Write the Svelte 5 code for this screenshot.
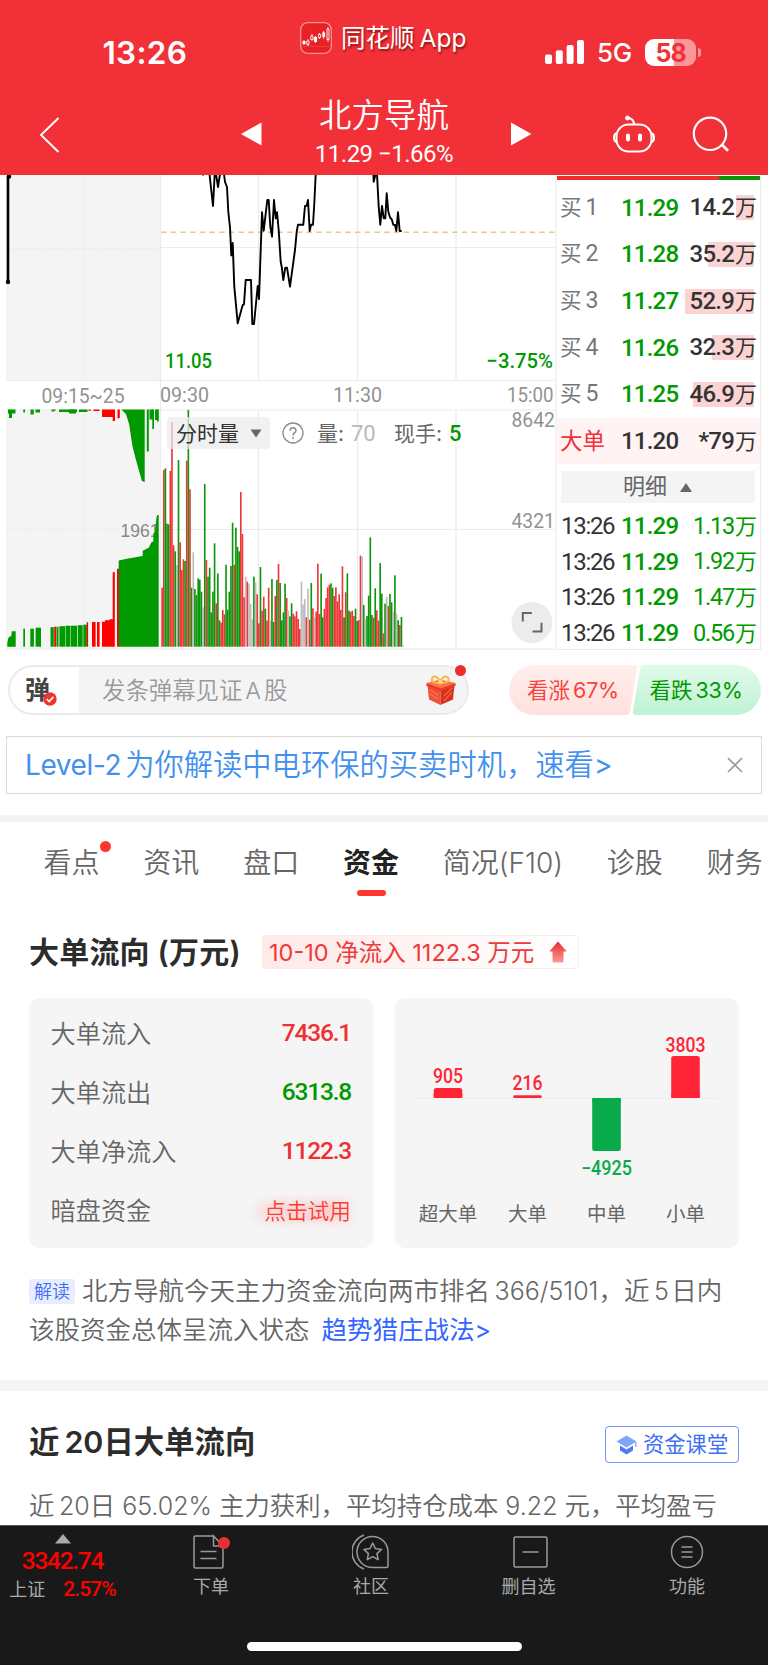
<script lang="ts">
  /**
   * Stock detail page: intraday chart, order book and capital flow.
   */
  interface Level {
    label: string;
    price: string;
    volume: string;
    depth: number;
  }

  const levels: Level[] = [
    { label: '买1', price: '11.29', volume: '14.2', depth: 18 },
    { label: '买2', price: '11.28', volume: '35.2', depth: 46 },
    { label: '买3', price: '11.27', volume: '52.9', depth: 69 },
    { label: '买4', price: '11.26', volume: '32.3', depth: 42 },
    { label: '买5', price: '11.25', volume: '46.9', depth: 61 },
  ];

  const trades = ['1.13', '1.92', '1.47', '0.56'];

  const tabs = ['看点', '资讯', '盘口', '资金', '简况(F10)', '诊股', '财务'];
  let activeTab = $state('资金');

  const flows = [
    { label: '大单流入', value: '7436.1', tone: 'up' },
    { label: '大单流出', value: '6313.8', tone: 'down' },
    { label: '大单净流入', value: '1122.3', tone: 'up' },
  ];

  const orderBars = [
    { label: '超大单', value: '905', x: 53, top: 90, height: 10, labelY: 85, w: 30 },
    { label: '大单', value: '216', x: 132.5, top: 97.3, height: 2.7, labelY: 92, w: 30 },
    { label: '中单', value: '−4925', x: 211.5, top: 100, height: 53, labelY: 177, w: 51 },
    { label: '小单', value: '3803', x: 290.5, top: 58, height: 42, labelY: 53.5, w: 40 },
  ];

  // minute volume, colour letter followed by the distance from the top (thirds of a pixel)
  const minuteVolume = (
    'r563 r210 g205 g371 g373 r213 r67 r436 g454 n495 g180 r427 r510 r478 g483 r182 g30 r268 g563 n457 ' +
    'g567 g585 g535 g539 g575 n622 g252 r480 g530 g503 g637 g575 g430 r610 g520 g661 r668 r630 r643 g494 ' +
    'g629 g575 g498 g368 r494 g383 g441 g454 r276 r402 r592 n530 r545 n551 n612 n658 g530 n547 r583 r670 ' +
    'g501 r632 r590 g626 r662 r563 n662 g537 g666 r588 g540 r492 g549 g661 g637 g551 r594 n632 g649 g610 ' +
    'r641 r649 r634 r657 r687 n545 n614 n597 r652 n566 r659 g549 r625 n652 r635 r491 r642 g521 g652 r627 ' +
    'r594 r562 r554 g550 g563 r588 r562 r604 r583 r630 r499 g652 r577 g520 g632 r636 r632 r648 g626 g663 ' +
    'r660 r467 n470 g615 n656 g648 g587 g412 g645 r653 g565 r631 r662 g489 g581 r700 g611 n590 r618 g582 ' +
    'g607 n636 g526 n641 g661 r675 g651 n736'
  ).split(' ').map((item, i) => {
    const top = Number(item.slice(1)) / 3 + 226;
    return { x: 161.3 + i * 1.6393, top, height: 472.7 - top, tone: item[0] };
  });

  // call auction bars: x, width, height, tone
  const matched: [number, number, number, string][] = [
    [23.3, 1.7, 18, 'g'], [30.3, 3.6, 18, 'g'], [35.6, 5.4, 19, 'g'],
    [50.5, 3.3, 19.5, 'g'], [54.2, 2, 20, 'r'], [56.5, 2, 20, 'g'],
    [59.4, 5.6, 20.5, 'g'], [65.5, 5, 21, 'g'], [71, 6.3, 21, 'g'],
    [78, 4.7, 21.5, 'g'], [83.3, 3.6, 22, 'g'], [86.7, 1.4, 24.5, 'r'],
    [92, 3.6, 24.7, 'r'], [97, 2.6, 24.7, 'r'], [102, 3.4, 25, 'r'],
    [105, 5, 26.5, 'r'], [109.5, 3.6, 27.5, 'r'], [112.7, 2.1, 74.5, 'r'],
    [117, 2.2, 78, 'r'],
  ];
  const unmatched: [number, number, number, string][] = [
    [8, 2, 4, 'g'], [9, 3, 8.5, 'g'], [12, 3.5, 4, 'g'], [23.3, 1.7, 3, 'g'],
    [30.5, 3.3, 5, 'g'], [35.5, 4.5, 3, 'g'], [51.5, 3, 2, 'g'], [54.3, 1.5, 1, 'r'],
    [59, 18, 2.5, 'g'], [69, 7, 4, 'g'], [79, 8.5, 2.5, 'g'], [88.5, 2.3, 1.3, 'r'],
    [93.5, 6, 1.5, 'r'], [102, 11, 7.5, 'r'], [112.7, 2.3, 11.5, 'r'], [117.5, 2.3, 8.7, 'r'],
    [146.8, 2, 42, 'g'], [149.5, 4, 10, 'g'], [152.3, 1.7, 19.5, 'g'], [155, 3.5, 10.5, 'g'],
    [157, 1.7, 12, 'g'],
  ];

  const pricePath =
    'M203 0v1.5M209.5 0L213 32L214.7 0M216 0L218 13L220 0M224 0L225 8L227 13L228.3 38L230 53L231.3 81.5L232.7 69' +
    'L234.3 112.7L237.7 149.3L242.7 131L244 130.3L245.7 106H251L252.3 150H254L257.7 112L259 125L262 38.3L263.7 56.7' +
    'L267.3 26H268.7L270.3 52.7L272 62.7L274 26L275.7 44.3L277 38.3L278.7 56L280.7 87.7L281.7 92.7L283.3 106' +
    'L285.3 93.7H287L290 112.7L295 76L296.7 57.7L298 50.7H303.3L305 32L306.7 31.7L308 26L309.7 57L311 50.7H313' +
    'L314.3 29.3L315.7 0M373.3 0L373.7 7.7L375.3 1L377 0L378.7 32.7L380.3 50.7L382 32L383.7 44.3H385.3L386.7 19.3' +
    'L388.3 37.7L390 43.3L391.7 45.3L393.3 50.7L395 51L396.3 57L398 38.3L399.7 57H401.7';
</script>

<div class="app">
  <header class="header">
    <div class="status">
      <span class="clock">13:26</span>
      <div class="island">
        <svg width="32" height="32" viewBox="0 0 32 32">
          <rect x="0.7" y="0.7" width="30.6" height="30.6" rx="7" fill="#e62226" stroke="#f78f90" stroke-width="1.3" />
          <path d="M2 24.5h28" stroke="#f04a4a" stroke-width="0.6" />
          <path d="M4 18v5M8 17v7M12 12v7M15.5 14v7M19.5 11v6M23.500 9v8M28 5v15" stroke="#fff" stroke-width="0.8" />
          <path d="M2.500 19h3v3h-3zM14 15h3v5h-3zM22.300 10.500h2.800v4.500h-2.800z" fill="#fff" />
          <path d="M6.800 19h2.200v3.500H6.800zM10.800 14h2.200v3.500h-2.200zM18.400 12.500h2.200v3h-2.200zM27 7h2v10.500h-2z" fill="#e62226" stroke="#fff" stroke-width="0.9" />
        </svg>
        <span>同花顺<i>App</i></span>
      </div>
      <div class="signals">
        <svg width="40" height="25" viewBox="0 0 40 25" fill="#fff">
          <rect x="0" y="14.500" width="7" height="9.500" rx="2" />
          <rect x="10.800" y="10.300" width="7" height="13.700" rx="2" />
          <rect x="21.600" y="5" width="7" height="19" rx="2" />
          <rect x="32" y="0" width="7" height="24" rx="2" />
        </svg>
        <span class="net">5G</span>
        <span class="battery">58</span>
      </div>
    </div>
    <div class="nav">
      <svg class="back" width="22" height="38" viewBox="0 0 22 38">
        <path d="M19.500 2L2 19l17.500 17" fill="none" stroke="#fff" stroke-width="1.900" />
      </svg>
      <div class="stock">
        <svg width="21" height="24" viewBox="0 0 21 24"><path d="M0 12L20.500 0.500v23z" fill="#fff" /></svg>
        <div class="name">
          <h1>北方导航</h1>
          <p>11.29 −1.66%</p>
        </div>
        <svg width="21" height="24" viewBox="0 0 21 24"><path d="M20.500 12L0 0.500v23z" fill="#fff" /></svg>
      </div>
      <div class="tools">
        <svg width="42" height="40" viewBox="0 0 42 40" fill="none" stroke="#fff" stroke-width="2">
          <rect x="3.500" y="9.500" width="35" height="27" rx="12" />
          <path d="M4 18c-4 1-4 8 0 9.500M38 18c4 1 4 8 0 9.500" />
          <path d="M21 9.500c0-4-2-6-6-6.500" />
          <circle cx="14.500" cy="3" r="2" fill="#fff" stroke-width="1" />
          <path d="M15 20.500v4M27 20.500v4" stroke-width="4" stroke-linecap="round" />
        </svg>
        <svg width="38" height="39" viewBox="0 0 38 39" fill="none" stroke="#fff" stroke-width="2.200">
          <circle cx="18" cy="18.800" r="16.200" />
          <path d="M29.500 29.300l6.500 6.500" stroke-width="2.800" />
        </svg>
      </div>
    </div>
  </header>

  <section class="quote">
    <div class="charts">
      <svg width="557" height="475" viewBox="0 1 557 475">
        <rect x="6" y="0" width="154.500" height="206.500" fill="#f4f4f4" />
        <rect x="6" y="235.500" width="154.500" height="239" fill="#f4f4f4" />
        <g stroke="#ececec" stroke-width="1.200">
          <path d="M160.500 0V475M258.500 0V206.500M357.500 0V206.500M456 0V206.500M556 0V475M160.500 73.500H556M6 206.500H556" />
          <path d="M258.500 236V475M357.500 236V475M456 236V475M6 236H556M160.500 355.500H556M6 475.200H556" />
          <path d="M84 0V206M84 236V475M6 74.800H160M6 355H160" stroke="#eaeaea" stroke-dasharray="2 1.500" />
        </g>
        <path d="M161 58.300H556" stroke="#e9c795" stroke-width="1.400" stroke-dasharray="5.500 4.200" />
        <path d="M8 2V108" stroke="#000" stroke-width="2.600" />
        <circle cx="9" cy="2.500" r="2.200" />
        <circle cx="8" cy="108" r="2.200" />
        <path d={pricePath} fill="none" stroke="#000" stroke-width="1.900" stroke-linejoin="round" />

        <g class="num strong" fill="#009a00" font-size="21">
          <text x="165" y="194" textLength="47" lengthAdjust="spacingAndGlyphs">11.05</text>
          <text x="486.500" y="194" textLength="66.500" lengthAdjust="spacingAndGlyphs">−3.75%</text>
        </g>
        <g class="num scale" fill="#929292" font-size="20.500">
          <text x="41.500" y="229" textLength="83" lengthAdjust="spacingAndGlyphs">09:15~25</text>
          <text x="160" y="227.500" textLength="49" lengthAdjust="spacingAndGlyphs">09:30</text>
          <text x="333" y="227.500" textLength="49" lengthAdjust="spacingAndGlyphs">11:30</text>
          <text x="507" y="227.500" textLength="46.500" lengthAdjust="spacingAndGlyphs">15:00</text>
        </g>
        <text class="sans" x="120.500" y="362.500" font-size="17.500" fill="#888">1961</text>

        {#each minuteVolume as bar}
          <rect class={bar.tone} x={bar.x} y={bar.top} width="1.640" height={bar.height} />
        {/each}
        <g class="auction">
          {#each matched as [x, width, height, tone]}
            <rect class={tone} {x} y={472.7 - height} {width} {height} />
          {/each}
          {#each unmatched as [x, width, height, tone]}
            <rect class={tone} {x} y="235.500" {width} {height} />
          {/each}
          <path class="g" d="M7.300 472.700v-4l1-5 3-2 .5-4.500H15.700v15.500z" />
          <path class="g" d="M118.700 472.700V386.500l9.500-2 14.500-2.500v-5.300l6-3 3-6h1.600V359h1.500l1.700-15.500.7-2.500h1.500v131.700z" />
          <path class="g" d="M121.500 235.500l4.500 4.500 3.300 11 1.700 11.700 1.700 10.600 3.300 12.700 3.300 11.700 2.500 9 2.900 1.500V235.500z" />
        </g>

        <g class="num scale" fill="#929292" font-size="20.500">
          <text x="511.500" y="252.500" textLength="43.500" lengthAdjust="spacingAndGlyphs">8642</text>
          <text x="511.500" y="353.500" textLength="43.500" lengthAdjust="spacingAndGlyphs">4321</text>
        </g>
        <circle cx="532" cy="448.500" r="20.500" fill="#ececec" />
        <path d="M522.800 447.500V439h9M532.500 457.500h9v-8.800" fill="none" stroke="#666" stroke-width="2" />
      </svg>
      <div class="legend">
        <span class="picker"><span>分时量</span>
          <svg width="12" height="9" viewBox="0 0 12 9"><path d="M0.500 0.500h11L6 8.500z" fill="#666" /></svg>
        </span>
        <svg class="help" width="22" height="22" viewBox="0 0 22 22" fill="none" stroke="#8a8a8a" stroke-width="1.300">
          <circle cx="11" cy="11" r="10" />
          <path d="M8 8.800c0-4 6-4 6-.3 0 2.300-3 2.500-3 5" stroke-width="1.500" />
          <path d="M11 15.300v1.700" stroke-width="1.700" />
        </svg>
        <span class="volume">量: <b>70</b></span>
        <span class="last">现手: <b>5</b></span>
      </div>
    </div>

    <aside class="book">
      <div class="ratio"></div>
      {#each levels as level}
        <div class="level">
          <span class="label">{level.label[0]}<i>{level.label[1]}</i></span>
          <span class="price">{level.price}</span>
          <span class="amount" style:--depth="{level.depth}px">{level.volume}<em>万</em></span>
        </div>
      {/each}
      <div class="level big">
        <span class="label">大单</span>
        <span class="price">11.20</span>
        <span class="amount">*79<em>万</em></span>
      </div>
      <div class="detail">
        明细
        <svg width="12" height="9" viewBox="0 0 12 9"><path d="M0 9h12L6 0z" fill="#666" /></svg>
      </div>
      {#each trades as amount}
        <div class="trade">
          <span class="time">13:26</span>
          <span class="price">11.29</span>
          <span class="amount">{amount}<em>万</em></span>
        </div>
      {/each}
    </aside>
  </section>

  <div class="social">
    <div class="danmu">
      <div class="mark">弹
        <svg width="14" height="14" viewBox="0 0 14 14">
          <circle cx="7" cy="7" r="6.700" fill="#ee352d" />
          <path d="M3.800 7l2.400 2.600 4.200-4.700" fill="none" stroke="#fff" stroke-width="1.600" />
        </svg>
      </div>
      <span class="hint">发条弹幕见证<i>A</i>股</span>
      <svg class="gift" width="30" height="32" viewBox="0 0 30 32">
        <path d="M1.500 11L14.500 15v16L3 25.500z" fill="#ef5236" />
        <path d="M28.500 11L14.500 15v16L27 25.500z" fill="#d93122" />
        <path d="M0.500 9L14 5.500 29.500 9 14.500 14.500z" fill="#ff7043" />
        <path d="M0.500 9v3l14 5 15-5V9l-15 5.300z" fill="#e73b26" />
        <path d="M4 16l8 5M4 20l8 5M18 27l8-9M18 22l8-8" stroke="#f98a49" stroke-width="1" />
        <path d="M14 8.500C9 9.500 5 8 6 4.500s6.500-2.500 8 4c2-6.500 7-7.500 8.500-4s-3.500 5-8.500 4z" fill="none" stroke="#f7b84a" stroke-width="2" />
        <circle cx="14.500" cy="8" r="2.300" fill="#ffd873" />
      </svg>
      <span class="dot"></span>
    </div>
    <div class="vote">
      <svg width="253" height="50" viewBox="0 0 253 50">
        <defs>
          <linearGradient id="rise" x1="0" y1="0" x2="0" y2="1">
            <stop offset="0" stop-color="#ffefed" />
            <stop offset="1" stop-color="#ffe0dc" />
          </linearGradient>
          <linearGradient id="fall" x1="0" y1="0" x2="0" y2="1">
            <stop offset="0" stop-color="#e0faeb" />
            <stop offset="1" stop-color="#bff2d4" />
          </linearGradient>
        </defs>
        <path d="M26 0h100q4 0 3 4l-7 43q-1 3-4 3H26A25 25 0 0 1 26 0z" fill="url(#rise)" />
        <path d="M136 0h92a25 25 0 0 1 0 50H128q-4 0-3-4l7-42q1-4 4-4z" fill="url(#fall)" />
      </svg>
      <span class="rise">看涨<i>67%</i></span>
      <span class="fall">看跌<i>33%</i></span>
    </div>
  </div>

  <div class="notice">
    <span><i>Level-2</i>为你解读中电环保的买卖时机，速看<i>&gt;</i></span>
    <svg width="16" height="16" viewBox="0 0 16 16"><path d="M1 1l14 14M15 1L1 15" stroke="#999" stroke-width="1.700" /></svg>
  </div>

  <nav class="tabs">
    {#each tabs as tab}
      <button class:active={activeTab === tab} class:fresh={tab === '看点'} onclick={() => (activeTab = tab)}>{tab}</button>
    {/each}
  </nav>

  <section class="flow">
    <div class="heading">
      <h2>大单流向<i>&nbsp;(</i>万元<i>)</i></h2>
      <span class="chip"><span>10-10 净流入 1122.3 万元</span>
        <svg width="18" height="22" viewBox="0 0 18 22">
          <defs>
            <linearGradient id="arrow" x1="0" y1="0" x2="0" y2="1">
              <stop offset="0" stop-color="#e92b2b" />
              <stop offset="1" stop-color="#fa9a9a" />
            </linearGradient>
          </defs>
          <path d="M9 0.500L17.800 10.500H14.500V20q0 1.500-1.500 1.500H5q-1.500 0-1.500-1.500v-9.500H0.200z" fill="url(#arrow)" />
        </svg>
      </span>
    </div>
    <div class="cards">
      <div class="card list">
        {#each flows as flow}
          <div class="item"><span>{flow.label}</span><b class={flow.tone}>{flow.value}</b></div>
        {/each}
        <div class="item"><span>暗盘资金</span><span class="trial">点击试用</span></div>
      </div>
      <div class="card">
        <svg width="344" height="250" viewBox="0 0 344 250">
          <path d="M21 100.200H323" stroke="#ebebeb" />
          {#each orderBars as bar}
            {@const down = bar.value.startsWith('−')}
            <g fill={down ? '#09aa4a' : '#ff2537'}>
              <rect x={bar.x - 14.3} y={bar.top} width="28.600" height={bar.height} rx={Math.min(2.5, bar.height / 2)} />
              {#if bar.height > 5}
                <rect x={bar.x - 14.3} y={down ? bar.top : bar.top + bar.height - 4} width="28.600" height="4" />
              {/if}
              <text
                class="num strong"
                x={bar.x - bar.w / 2}
                y={bar.labelY}
                font-size="19.500"
                textLength={bar.w}
                lengthAdjust="spacingAndGlyphs">{bar.value}</text>
            </g>
            <text class="axis" x={bar.x} y="223" text-anchor="middle">{bar.label}</text>
          {/each}
        </svg>
      </div>
    </div>
    <p class="insight">
      <span class="tag">解读</span>北方导航今天主力资金流向两市排名<i>&#8201;366/5101</i>，近<i>&#8201;5&#8202;</i>日内<br />该股资金总体呈流入状态<a href="#strategy">趋势猎庄战法<i>&gt;</i></a>
    </p>
  </section>

  <section class="recent">
    <div class="heading">
      <h2>近<i>&#8201;20</i>日大单流向</h2>
      <span class="course">
        <svg width="21" height="20" viewBox="0 0 21 20">
          <path d="M10.500 0.500L20.500 6.500 10.500 12.500 0.500 6.500z" fill="#7fa6fb" />
          <path d="M4 10.500l6.500 4 6.500-4v5L10.500 19.500 4 15.500z" fill="#4b7ef5" />
          <path d="M19.800 7v5" stroke="#7fa6fb" stroke-width="1.200" />
        </svg>
        <span>资金课堂</span>
      </span>
    </div>
    <p>近<i>&#8201;20</i>日<i>&nbsp;65.02%&nbsp;</i>主力获利，平均持仓成本<i>&nbsp;9.22&nbsp;</i>元，平均盈亏</p>
  </section>

  <footer class="footer">
    <div class="bar">
      <div class="index">
        <svg width="16" height="10" viewBox="0 0 16 10"><path d="M0 9.500h16L8 0z" fill="#aaa" /></svg>
        <b>3342.74</b>
        <p>上证<span>2.57%</span></p>
      </div>
      <div class="entry">
        <svg width="37" height="34" viewBox="0 0 37 34" fill="none" stroke="#999" stroke-width="1.500">
          <path d="M20.500 1H2.500q-1.500 0-1.500 1.500v29q0 1.500 1.500 1.500h26q1.500 0 1.500-1.500V11L20.500 1v10H30M7.500 16.500h16M7.500 23.500h16" />
          <circle class="badge" cx="31" cy="8" r="6" />
        </svg>
        <span>下单</span>
      </div>
      <div class="entry">
        <svg width="38" height="36" viewBox="0 0 38 36" fill="none" stroke="#999" stroke-width="1.500">
          <path d="M36 18v14q0 1.500-1.500 1.500H20.500A15.500 15.500 0 1 1 36 18z" />
          <path d="M12 1A18 18 0 0 0 12 35" />
          <path d="M20.700 9l2.700 5.600 6.100.8-4.500 4.200 1.100 6.100-5.400-3-5.400 3 1.100-6.100-4.500-4.200 6.100-.8z" stroke-linejoin="round" />
        </svg>
        <span>社区</span>
      </div>
      <div class="entry remove">
        <svg width="35" height="32" viewBox="0 0 35 32" fill="none" stroke="#999" stroke-width="1.500">
          <rect x="1" y="1" width="33" height="30" rx="1.500" />
          <path d="M9.500 16h16" />
        </svg>
        <span>删自选</span>
      </div>
      <div class="entry">
        <svg width="34" height="34" viewBox="0 0 34 34" fill="none" stroke="#999" stroke-width="1.500">
          <circle cx="17" cy="17" r="15.500" />
          <path d="M11.500 12h11M11.500 17h11M11.500 22h11" />
        </svg>
        <span>功能</span>
      </div>
    </div>
    <div class="home"></div>
  </footer>
</div>

<style>
  :global(body) {
    margin: 0;
    background: #fff;
  }

  .app {
    display: flex;
    flex-direction: column;
    box-sizing: border-box;
    width: 768px;
    height: 1665px;
    overflow: hidden;
    background: #fff;
    color: #666;
    font-family: Inter, 'Noto Sans CJK SC', sans-serif;
    white-space: nowrap;
  }

  h1, h2, p {
    margin: 0;
  }

  i, em {
    font-style: normal;
  }

  svg {
    display: block;
    flex: none;
  }

  .num {
    font-family: Roboto, sans-serif;
  }

  .scale {
    font-weight: 450;
  }

  .strong {
    font-weight: 500;
  }

  .sans {
    font-family: 'Liberation Sans', sans-serif;
  }

  .r { fill: #ee3538; }
  .g { fill: #0b960b; }
  .n { fill: #bdbdbd; }

  .auction .r { fill: #f00; }
  .auction .g { fill: #090; }

  .header {
    height: 175px;
    flex: none;
    background: #f23037;
    color: #fff;
  }

  .status {
    display: grid;
    grid-template-columns: 300px 245px 1fr;
    height: 90px;
  }

  .clock {
    padding: 35px 0 0 102.500px;
    font-size: 31.500px;
    font-weight: 600;
    line-height: 36px;
    letter-spacing: 0.300px;
  }

  .island {
    display: flex;
    gap: 9px;
    padding-top: 22px;
    font-size: 24.500px;
    line-height: 32px;
    text-shadow: 1px 2px 2px rgba(60, 0, 0, 0.55);
  }

  .island i {
    margin-left: 5px;
  }

  .signals {
    display: flex;
    align-items: center;
    height: 27px;
    padding-top: 39px;
  }

  .net {
    margin-left: 12px;
    font-size: 26px;
    font-weight: 450;
    letter-spacing: -0.2px;
  }

  .battery {
    position: relative;
    width: 51px;
    height: 27px;
    margin-left: 13px;
    border-radius: 9px;
    background: linear-gradient(90deg, #fff 57%, #f9989b 57%);
    color: #f23037;
    font-size: 25px;
    font-weight: 700;
    line-height: 28px;
    text-align: center;
    letter-spacing: -1px;
  }

  .battery::after {
    content: '';
    position: absolute;
    top: 9px;
    right: -5px;
    width: 3px;
    height: 9px;
    border-radius: 0 4px 4px 0;
    background: #f9989b;
  }

  .nav {
    display: flex;
    align-items: flex-start;
    height: 85px;
  }

  .back {
    margin: 26px 0 0 39px;
  }

  .stock {
    display: flex;
    width: 291px;
    margin-left: 180px;
    justify-content: space-between;
  }

  .stock svg {
    margin-top: 32px;
  }

  .name {
    margin-right: 5px;
    text-align: center;
  }

  .name h1 {
    margin-top: 6px;
    font-size: 32.500px;
    font-weight: 350;
    line-height: 40px;
  }

  .name p {
    margin-top: 6px;
    font-family: Roboto, sans-serif;
    font-size: 24px;
    font-weight: 450;
    line-height: 24px;
    letter-spacing: -0.5px;
  }

  .tools {
    display: flex;
    gap: 37px;
    margin: 25px 0 0 81px;
  }

  .quote {
    display: flex;
    height: 475px;
    flex: none;
  }

  .charts {
    position: relative;
    width: 557px;
  }

  .legend {
    position: absolute;
    top: 242px;
    left: 167px;
    display: flex;
    align-items: center;
    height: 32px;
    font-size: 21px;
  }

  .legend span span, .volume, .last {
    margin-top: -3px;
  }

  .picker {
    display: flex;
    align-items: center;
    gap: 11px;
    box-sizing: border-box;
    width: 103px;
    height: 32px;
    padding-left: 9px;
    border-radius: 4px;
    background: rgba(236, 236, 236, 0.72);
    color: #333;
  }

  .help {
    margin-left: 12px;
  }

  .legend b {
    margin-left: 1px;
    font-family: Roboto, sans-serif;
    font-weight: 400;
    font-size: 22px;
  }

  .volume {
    width: 63px;
    margin-left: 13px;
  }

  .volume b {
    color: #b9b9b9;
  }

  .last {
    margin-left: 14px;
  }

  .last b {
    color: #009a00;
    font-weight: 500;
  }

  .book {
    box-sizing: border-box;
    width: 204px;
    padding-top: 1px;
    border-right: 1px solid #ececec;
    border-bottom: 1px solid #ececec;
    font-family: Roboto, 'Noto Sans CJK SC', sans-serif;
    font-size: 24px;
  }

  .ratio {
    height: 4px;
    margin-bottom: 4.300px;
    background: linear-gradient(90deg, #ee2d2d 79.700%, #0a960a 79.700%);
  }

  .level, .trade {
    display: grid;
    grid-template-columns: 65px 56px 1fr;
    align-items: center;
    height: 46.700px;
    padding: 0 3px 0 4px;
    line-height: 30px;
    font-weight: 500;
  }

  .label {
    margin-left: -1px;
    color: #777;
    font-size: 21.500px;
    font-weight: 400;
  }

  .label i {
    margin-left: 4px;
    font-size: 23px;
  }

  .price {
    color: #009a00;
    letter-spacing: -0.800px;
    margin-left: -5px;
  }

  .amount {
    color: #333;
    text-align: right;
    letter-spacing: -0.800px;
    background: linear-gradient(#fcd3d3, #fcd3d3) right 3px center / var(--depth, 0) 25px no-repeat;
  }

  .amount em {
    margin-left: 1px;
    font-size: 22px;
    font-weight: 400;
    letter-spacing: 0;
  }

  .big {
    background: #fff3f3;
  }

  .big .label {
    color: #f23037;
    font-size: 22.500px;
  }

  .big .price {
    color: #333;
  }

  .detail {
    display: flex;
    align-items: center;
    justify-content: center;
    gap: 13px;
    height: 32px;
    margin: 7px 5px 4.800px 4px;
    padding-right: 1px;
    background: #f4f4f4;
    color: #666;
    font-size: 22px;
    line-height: 30px;
  }

  .trade {
    height: 35.700px;
  }

  .trade .time {
    color: #333;
    font-weight: 450;
    letter-spacing: -1.300px;
  }

  .trade .amount {
    color: #009a00;
    font-size: 23.500px;
    font-weight: 450;
    letter-spacing: -1.200px;
  }

  .social {
    display: flex;
    justify-content: space-between;
    height: 50px;
    flex: none;
    padding: 14.500px 7px 21.500px 8px;
  }

  .danmu {
    position: relative;
    display: flex;
    align-items: center;
    box-sizing: border-box;
    width: 461px;
    border: 2px solid #ebebeb;
    border-radius: 25px;
    background: linear-gradient(90deg, #fff 69px, #f4f4f4 69px);
  }

  .mark {
    position: relative;
    width: 92px;
    padding-left: 15px;
    box-sizing: border-box;
    color: #444;
    font-size: 25px;
    font-weight: 700;
    line-height: 46px;
  }

  .mark svg {
    position: absolute;
    left: 33px;
    top: 25px;
  }

  .hint {
    flex: 1;
    margin-top: -2px;
    color: #999;
    font-size: 23.400px;
    font-weight: 350;
  }

  .hint i {
    margin: 0 3px;
  }

  .gift {
    margin-right: 11px;
  }

  .dot {
    position: absolute;
    top: -2px;
    right: 1px;
    width: 11px;
    height: 11px;
    border-radius: 50%;
    background: #ea2f2d;
  }

  .vote {
    display: grid;
    grid-template-columns: 127px 126px;
    line-height: 50px;
    font-size: 21.500px;
    text-align: center;
  }

  .vote svg {
    grid-area: 1 / 1 / 2 / 3;
  }

  .vote i {
    margin-left: 3px;
    letter-spacing: -0.2px;
  }

  .rise {
    grid-area: 1 / 1;
    padding-left: 3px;
    color: #f8423d;
  }

  .fall {
    grid-area: 1 / 2;
    padding-right: 4px;
    color: #009a00;
  }

  .notice {
    display: flex;
    align-items: center;
    justify-content: space-between;
    box-sizing: border-box;
    height: 58px;
    flex: none;
    margin: 0 6px 21px;
    padding: 0 17px 0 18px;
    border: 1.500px solid #dadada;
    color: #4390ee;
    font-size: 29.300px;
    font-weight: 350;
  }

  .notice span {
    margin-top: -6px;
  }

  .notice i {
    font-size: 28px;
    font-weight: 400;
  }

  .notice i:first-child {
    margin-right: 4px;
    letter-spacing: -0.4px;
  }

  .notice svg {
    margin-right: 1px;
  }

  .tabs {
    display: flex;
    gap: 43.800px;
    height: 120px;
    flex: none;
    box-sizing: border-box;
    padding: 18.500px 0 0 43.500px;
    border-top: 7px solid #f4f4f4;
  }

  .tabs button {
    position: relative;
    flex: none;
    height: 44px;
    padding: 0;
    border: 0;
    background: none;
    color: #666;
    font: 350 28px/44px Inter, 'Noto Sans CJK SC', sans-serif;
  }

  .tabs .active {
    color: #222;
    font-weight: 600;
  }

  .tabs .active::after {
    content: '';
    position: absolute;
    top: 49.500px;
    left: 14px;
    width: 29px;
    height: 6px;
    border-radius: 3px;
    background: #ff3530;
  }

  .tabs .fresh::after {
    content: '';
    position: absolute;
    top: 0.500px;
    right: -11px;
    width: 11px;
    height: 11px;
    border-radius: 50%;
    background: #ff3530;
  }

  .flow {
    height: 445px;
    flex: none;
    padding: 0 29px;
  }

  .heading {
    display: flex;
    align-items: center;
    height: 34px;
  }

  h2 {
    color: #2c2c2c;
    font-size: 30px;
    font-weight: 600;
    line-height: 34px;
  }

  .flow h2 {
    width: 233px;
    letter-spacing: 0.200px;
  }

  .chip {
    display: flex;
    align-items: center;
    gap: 15px;
    box-sizing: border-box;
    width: 317px;
    height: 34px;
    padding-left: 6px;
    border: 1px solid #ffeaea;
    border-radius: 3px;
    background: linear-gradient(90deg, #ffe9e9, #fff);
    color: #ee3a38;
    font-size: 23.500px;
  }

  .chip span {
    margin-top: -3px;
  }

  .cards {
    display: grid;
    grid-template-columns: 344px 344px;
    gap: 22px;
    margin-top: 29px;
  }

  .card {
    height: 250px;
    border-radius: 10px;
    background: #f5f5f5;
  }

  .list {
    box-sizing: border-box;
    padding: 5px 22px 0 21.500px;
  }

  .item {
    display: flex;
    align-items: center;
    justify-content: space-between;
    height: 59px;
    font-size: 25.200px;
    font-weight: 350;
  }

  .item span {
    margin-top: -1px;
  }

  .item b {
    font-family: Roboto, sans-serif;
    font-size: 24.500px;
    font-weight: 500;
    letter-spacing: -1.200px;
  }

  .up {
    color: #f03030;
  }

  .down {
    color: #009a00;
  }

  .item .trial {
    color: #ff3b34;
    font-size: 21.700px;
    text-shadow: 0 0 12px rgba(255, 60, 50, 0.4), -14px 0 9px rgba(255, 60, 50, 0.2);
  }

  .axis {
    fill: #666;
    font-size: 19.500px;
  }

  .insight {
    margin-top: 24px;
    font-size: 25.500px;
    font-weight: 350;
    line-height: 37.500px;
  }

  .insight i, .recent p i {
    font-size: 25px;
  }

  .tag {
    display: inline-block;
    width: 46px;
    height: 25px;
    margin-right: 7px;
    border-radius: 3px;
    background: #e8eeff;
    color: #3d6cf5;
    font-size: 18px;
    line-height: 25px;
    text-align: center;
    vertical-align: 2px;
  }

  .insight a {
    margin-left: 12px;
    color: #3366ff;
    font-weight: 400;
    text-decoration: none;
  }

  .recent {
    height: 145px;
    flex: none;
    box-sizing: border-box;
    padding: 35px 29px 0;
    border-top: 11px solid #f4f4f4;
  }

  .recent h2 {
    margin-top: -6px;
    font-size: 30.400px;
  }

  .recent .heading {
    justify-content: space-between;
    height: 37px;
  }

  .course {
    display: flex;
    align-items: center;
    gap: 6px;
    box-sizing: border-box;
    width: 134px;
    height: 37px;
    padding-left: 10px;
    border: 1.500px solid #6c94fa;
    border-radius: 4px;
    color: #3f70f5;
    font-size: 21.300px;
  }

  .course span {
    margin-top: -4px;
  }

  .recent p {
    margin-top: 24px;
    font-size: 25.400px;
    font-weight: 350;
    line-height: 37px;
  }

  .footer {
    flex: none;
    box-sizing: border-box;
    height: 140px;
    border-top: 1px solid #555;
    background: #191919;
    color: #aaa;
  }

  .bar {
    display: grid;
    grid-template-columns: 131px 160px 160px 155px 162px;
    height: 116px;
  }

  .index {
    display: flex;
    flex-direction: column;
    align-items: center;
    padding: 8px 6px 0 0;
    font-size: 18px;
    line-height: 22px;
  }

  .index b, .index p span {
    color: #f00;
    font-family: Roboto, sans-serif;
    font-weight: 500;
  }

  .index b {
    margin-top: 4px;
    font-size: 24.500px;
    line-height: 26px;
    letter-spacing: -1.300px;
  }

  .index p {
    margin-top: 4px;
  }

  .index p span {
    margin-left: 18px;
    font-size: 21px;
    letter-spacing: -0.900px;
  }

  .entry {
    display: flex;
    flex-direction: column;
    align-items: center;
    font-size: 18px;
    line-height: 22px;
  }

  .entry svg {
    height: 36px;
    margin: 8px 0 6px;
  }

  .remove svg {
    margin-left: 4px;
  }

  .badge {
    fill: #e93030;
    stroke: none;
  }

  .home {
    width: 275px;
    height: 9px;
    margin: 0 auto;
    border-radius: 5px;
    background: #fff;
  }
</style>
